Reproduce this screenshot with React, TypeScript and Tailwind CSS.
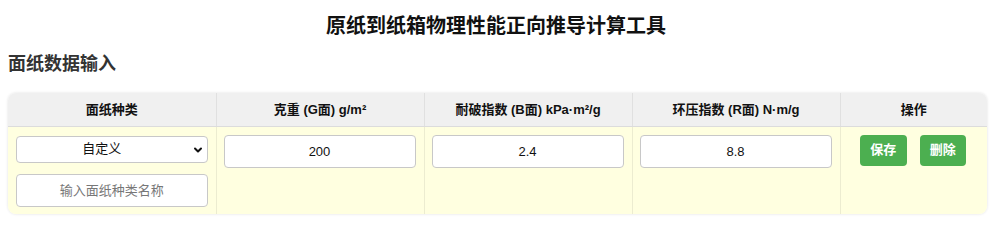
import { ChevronDown } from 'lucide-react'

const FONT = "font-['Liberation_Sans','Noto_Sans_CJK_SC',sans-serif]"

const COLUMNS = [
  { label: '面纸种类', w: 'w-[208px]' },
  { label: '克重 (G面) g/m²', w: 'w-[208px]' },
  { label: '耐破指数 (B面) kPa·m²/g', w: 'w-[208px]' },
  { label: '环压指数 (R面) N·m/g', w: 'w-[208px]' },
  { label: '操作', w: 'w-[147px]' },
]

export default function App() {
  return (
    <div className={`${FONT} text-[#111] px-2 pt-[13px] bg-white min-h-[230px]`}>
      <h1 className="text-center text-[20px] font-bold leading-[26px]">原纸到纸箱物理性能正向推导计算工具</h1>
      <h2 className="mt-[13px] text-[18px] font-bold leading-[24px] text-[#333]">面纸数据输入</h2>

      <div className="mt-[17px] w-[979px] rounded-lg overflow-hidden shadow-[0_0_3px_rgba(0,0,0,0.12)]">
        <table className="w-full table-fixed border-collapse text-[13px]">
          <thead>
            <tr className="bg-[#f0f0f0]">
              {COLUMNS.map((c, i) => (
                <th
                  key={c.label}
                  className={`${c.w} h-[33px] font-bold text-center border-b border-[#dcdcdc] ${i > 0 ? 'border-l border-l-[#e0e0e0]' : ''}`}
                >
                  {c.label}
                </th>
              ))}
            </tr>
          </thead>
          <tbody>
            <tr className="bg-[#ffffe0] align-top">
              <td className="px-2 pt-[9px] pb-[7px]">
                <div className="relative">
                  <select className="w-full h-[27px] appearance-none rounded border border-[#c8c8c8] bg-white text-center text-[13px] pr-5">
                    <option>自定义</option>
                  </select>
                  <ChevronDown className="absolute right-[4px] top-[8px] w-3 h-3 pointer-events-none" strokeWidth={4} />
                </div>
                <input
                  placeholder="输入面纸种类名称"
                  className="mt-[11px] w-full h-[33px] rounded border border-[#c8c8c8] bg-white text-center text-[13px] placeholder:text-[#777]"
                />
              </td>
              {['200', '2.4', '8.8'].map(v => (
                <td key={v} className="pl-[7px] pr-2 pt-[8px] pb-2 border-l border-[#ececd0]">
                  <input
                    defaultValue={v}
                    className="w-full h-[33px] rounded border border-[#c8c8c8] bg-white text-center text-[13px]"
                  />
                </td>
              ))}
              <td className="pt-[8px] pb-2 border-l border-[#ececd0]">
                <div className="flex justify-center gap-[13px] pr-[2px]">
                  <button className="w-[47px] h-[31px] rounded bg-[#4caf50] text-white text-[13px] font-bold">保存</button>
                  <button className="w-[46px] h-[31px] rounded bg-[#4caf50] text-white text-[13px] font-bold">删除</button>
                </div>
              </td>
            </tr>
          </tbody>
        </table>
      </div>
    </div>
  )
}
